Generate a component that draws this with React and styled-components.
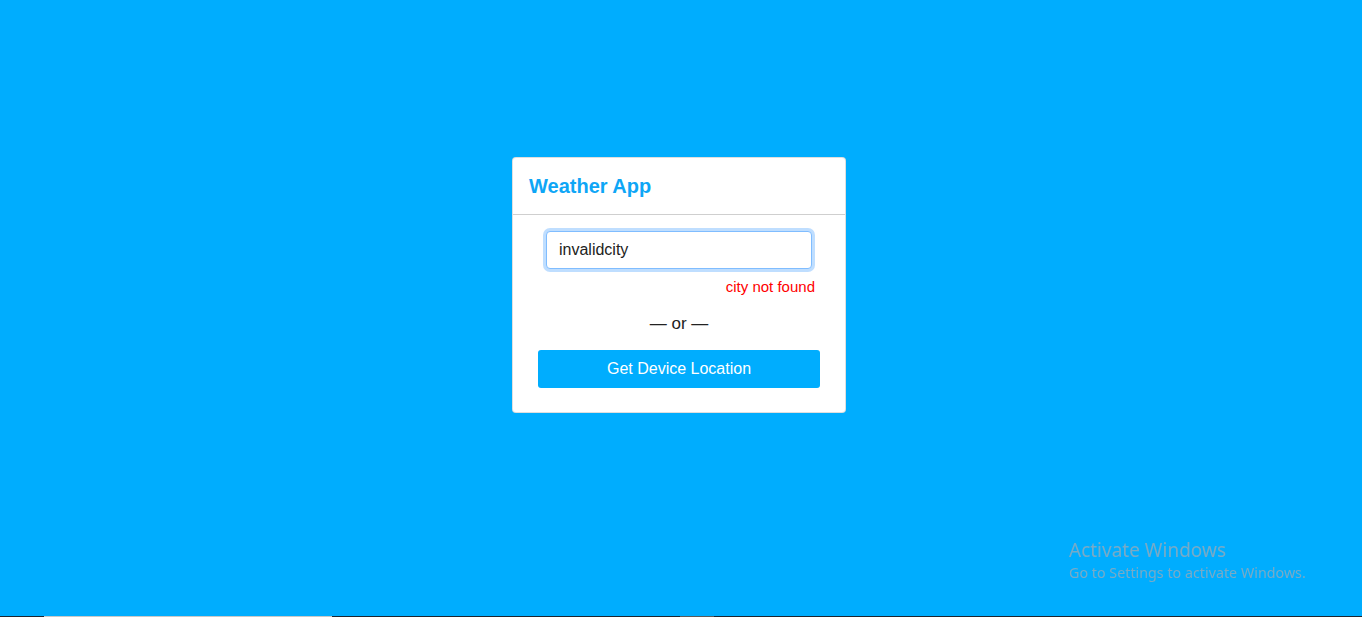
import React from "react";
import styled, { createGlobalStyle } from "styled-components";

const GlobalStyle = createGlobalStyle`
  html, body {
    margin: 0;
    padding: 0;
    height: 100%;
    background: #00adfe;
    font-family: "Liberation Sans", Arial, sans-serif;
  }
  #root {
    min-height: 100%;
  }
`;

const Page = styled.div`
  min-height: 100vh;
  display: flex;
  justify-content: center;
  align-items: flex-start;
  padding: 157px 4px 0 0;
  box-sizing: border-box;
`;

const Card = styled.div`
  width: 334px;
  background: #fff;
  border: 1px solid rgba(0, 0, 0, 0.125);
  border-radius: 4px;
  box-sizing: border-box;
`;

const Header = styled.div`
  padding: 16px;
  border-bottom: 1px solid #cfcfcf;
`;

const Title = styled.h1`
  margin: 0;
  font-size: 20px;
  line-height: 24px;
  font-weight: 700;
  color: #0ea6f6;
`;

const Body = styled.div`
  padding: 16px 25px 24px;
  display: flex;
  flex-direction: column;
`;

const CityInput = styled.input`
  margin: 0 8px;
  height: 38px;
  box-sizing: border-box;
  padding: 0 12px;
  font-family: "Liberation Sans", Arial, sans-serif;
  font-size: 16px;
  color: #222;
  caret-color: #222;
  border: 1px solid #80bdff;
  border-radius: 4px;
  box-shadow: 0 0 0 3px rgba(0, 123, 255, 0.25);
  outline: none;
`;

const ErrorText = styled.div`
  margin-top: 8px;
  padding-right: 5px;
  text-align: right;
  font-size: 15px;
  line-height: 20px;
  color: #ff0000;
`;

const Divider = styled.div`
  margin-top: 17px;
  text-align: center;
  font-size: 17px;
  line-height: 20px;
  color: #222;
`;

const LocationButton = styled.button`
  margin-top: 16px;
  height: 38px;
  border: none;
  border-radius: 3px;
  background: #00adfe;
  color: #fff;
  font-family: "Liberation Sans", Arial, sans-serif;
  font-size: 16px;
  cursor: pointer;
`;

const Watermark = styled.div`
  position: fixed;
  left: 1069px;
  top: 537px;
  font-family: "Noto Sans", "Open Sans", sans-serif;
  color: rgba(160, 170, 180, 0.75);
  pointer-events: none;
`;

const WatermarkTitle = styled.div`
  font-size: 19px;
  line-height: 26px;
`;

const WatermarkSub = styled.div`
  font-size: 14.3px;
  line-height: 20px;
`;

const Taskbar = styled.div`
  position: fixed;
  left: 0;
  right: 0;
  bottom: 0;
  height: 1px;
  background: #1b2530;
  display: flex;
`;

const TaskSlot = styled.div`
  margin-left: ${({ left }) => left}px;
  width: ${({ width }) => width}px;
  background: ${({ tone }) => tone};
`;

export default function App() {
  return (
    <>
      <GlobalStyle />
      <Page>
        <Card>
          <Header>
            <Title>Weather App</Title>
          </Header>
          <Body>
            <CityInput defaultValue="invalidcity" autoFocus />
            <ErrorText>city not found</ErrorText>
            <Divider>— or —</Divider>
            <LocationButton>Get Device Location</LocationButton>
          </Body>
        </Card>
      </Page>
      <Watermark>
        <WatermarkTitle>Activate Windows</WatermarkTitle>
        <WatermarkSub>Go to Settings to activate Windows.</WatermarkSub>
      </Watermark>
      <Taskbar>
        <TaskSlot left={44} width={288} tone="#c9c9c9" />
        <TaskSlot left={348} width={34} tone="#5a5a5a" />
      </Taskbar>
    </>
  );
}
